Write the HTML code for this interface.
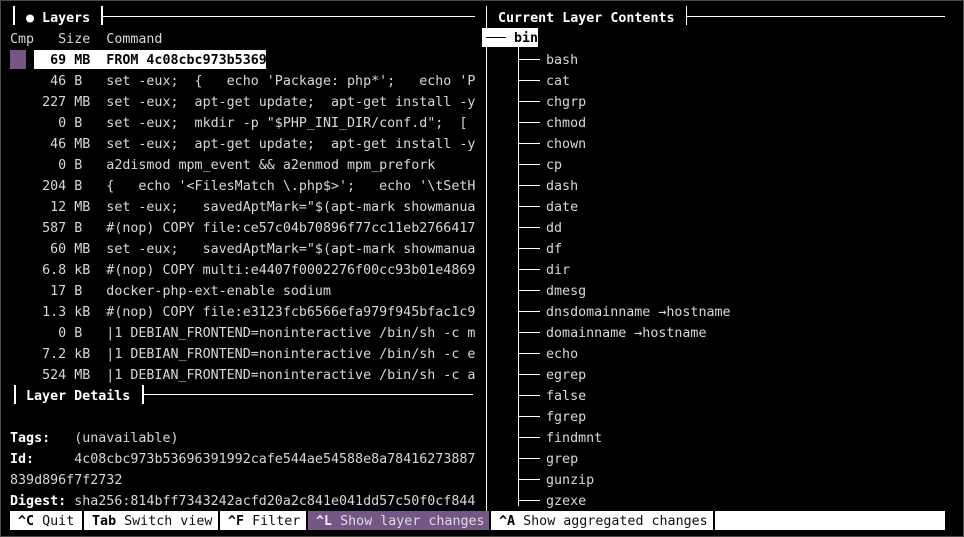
<!DOCTYPE html>
<html><head><meta charset="utf-8"><style>
html,body{margin:0;padding:0;background:#000;}
body{width:964px;height:537px;position:relative;overflow:hidden;font-family:"DejaVu Sans Mono","Liberation Mono",monospace;font-size:13.33px;color:#d8d8d8;}
#frame{position:absolute;left:0;top:0;width:962px;height:535px;border:1px solid #4a4a4a;}
.r{position:absolute;height:21px;line-height:21px;white-space:pre;margin-top:1px;}
.b{font-weight:bold;color:#fff;}
.vl{position:absolute;width:2px;background:#fff;}
.hl{position:absolute;height:1px;background:#fff;}
.seg{position:absolute;top:511px;height:19px;line-height:21px;background:#fff;color:#111;white-space:pre;overflow:hidden;}
.seg b{color:#000;}
</style></head><body>
<div id="frame"></div>
<div class="vl" style="left:13px;top:6px;height:19px"></div>
<div class="r b" style="left:26px;top:7px">● Layers</div>
<div class="vl" style="left:101px;top:6px;height:19px"></div>
<div class="hl" style="left:102px;top:16px;width:373px"></div>
<div class="r" style="left:10px;top:28px">Cmp   Size  Command</div>
<div style="position:absolute;left:10px;top:50px;width:16px;height:19px;background:#765685"></div>
<div style="position:absolute;left:34px;top:50px;width:232px;height:19px;background:#fff"></div>
<div class="r" style="left:10px;top:49px;color:#000;font-weight:bold">     69 MB  FROM 4c08cbc973b5369</div>
<div class="r" style="left:10px;top:70px">     46 B   set -eux;  {   echo 'Package: php*';   echo 'P</div>
<div class="r" style="left:10px;top:91px">    227 MB  set -eux;  apt-get update;  apt-get install -y</div>
<div class="r" style="left:10px;top:112px">      0 B   set -eux;  mkdir -p "$PHP_INI_DIR/conf.d";  [</div>
<div class="r" style="left:10px;top:133px">     46 MB  set -eux;  apt-get update;  apt-get install -y</div>
<div class="r" style="left:10px;top:154px">      0 B   a2dismod mpm_event &amp;&amp; a2enmod mpm_prefork</div>
<div class="r" style="left:10px;top:175px">    204 B   {   echo '&lt;FilesMatch \.php$&gt;';   echo '\tSetH</div>
<div class="r" style="left:10px;top:196px">     12 MB  set -eux;   savedAptMark="$(apt-mark showmanua</div>
<div class="r" style="left:10px;top:217px">    587 B   #(nop) COPY file:ce57c04b70896f77cc11eb2766417</div>
<div class="r" style="left:10px;top:238px">     60 MB  set -eux;   savedAptMark="$(apt-mark showmanua</div>
<div class="r" style="left:10px;top:259px">    6.8 kB  #(nop) COPY multi:e4407f0002276f00cc93b01e4869</div>
<div class="r" style="left:10px;top:280px">     17 B   docker-php-ext-enable sodium</div>
<div class="r" style="left:10px;top:301px">    1.3 kB  #(nop) COPY file:e3123fcb6566efa979f945bfac1c9</div>
<div class="r" style="left:10px;top:322px">      0 B   |1 DEBIAN_FRONTEND=noninteractive /bin/sh -c m</div>
<div class="r" style="left:10px;top:343px">    7.2 kB  |1 DEBIAN_FRONTEND=noninteractive /bin/sh -c e</div>
<div class="r" style="left:10px;top:364px">    524 MB  |1 DEBIAN_FRONTEND=noninteractive /bin/sh -c a</div>
<div class="vl" style="left:14px;top:385px;height:19px"></div>
<div class="r b" style="left:26px;top:385px">Layer Details</div>
<div class="vl" style="left:142px;top:385px;height:19px"></div>
<div class="hl" style="left:143px;top:394px;width:330px"></div>
<div class="r" style="left:10px;top:427px"><span class="b">Tags:</span>   (unavailable)</div>
<div class="r" style="left:10px;top:448px"><span class="b">Id:</span>     4c08cbc973b53696391992cafe544ae54588e8a78416273887</div>
<div class="r" style="left:10px;top:469px">839d896f7f2732</div>
<div class="r" style="left:10px;top:490px"><span class="b">Digest:</span> sha256:814bff7343242acfd20a2c841e041dd57c50f0cf844</div>
<div class="vl" style="left:486px;top:6px;height:505px;width:1px"></div>
<div class="r b" style="left:498px;top:7px">Current Layer Contents</div>
<div class="vl" style="left:686px;top:6px;height:19px;width:1px"></div>
<div class="hl" style="left:687px;top:16px;width:258px"></div>
<div style="position:absolute;left:482px;top:28px;width:56px;height:19px;background:#fff"></div>
<div class="hl" style="left:486px;top:37px;width:20px;background:#000"></div>
<div class="r" style="left:514px;top:27px;color:#000;font-weight:bold">bin</div>
<div class="vl" style="left:518px;top:47px;width:1px;height:459px"></div>
<div id="tree"></div>
<script>
var n=["bash","cat","chgrp","chmod","chown","cp","dash","date","dd","df","dir","dmesg","dnsdomainname →hostname","domainname →hostname","echo","egrep","false","fgrep","findmnt","grep","gunzip","gzexe"];
var h="";
for(var i=0;i<n.length;i++){var t=7+21*(i+2);
h+='<div class="hl" style="left:519px;top:'+(t+10)+'px;width:21px"></div><div class="r" style="left:546px;top:'+t+'px">'+n[i]+'</div>';}
document.getElementById("tree").innerHTML=h;
</script>
<div class="seg" style="left:10px;width:72px"> <b>^C</b> Quit</div>
<div class="seg" style="left:84px;width:134px"> <b>Tab</b> Switch view</div>
<div class="seg" style="left:220px;width:86px"> <b>^F</b> Filter</div>
<div class="seg" style="left:308px;width:181px;background:#765685;color:#ddd"> <b style="color:#eee">^L</b> Show layer changes</div>
<div class="seg" style="left:491px;width:222px"> <b>^A</b> Show aggregated changes</div>
<div class="seg" style="left:715px;width:230px"></div>
</body></html>
